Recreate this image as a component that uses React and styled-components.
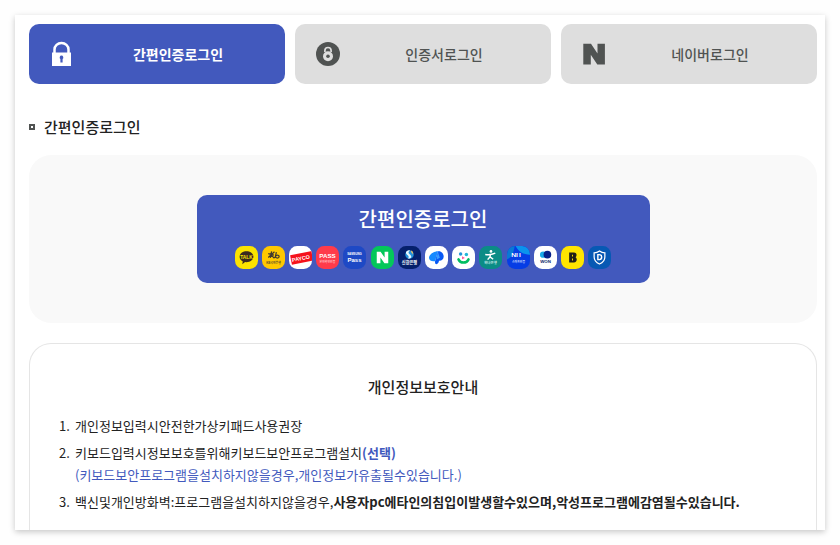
import React from "react";
import styled, { createGlobalStyle } from "styled-components";

const GlobalStyle = createGlobalStyle`
  *, *::before, *::after { box-sizing: border-box; }
  body { margin: 0; background: #fefefe; color: #222; font-family: "Noto Sans CJK KR", "Noto Sans", sans-serif; }
  button { font-family: inherit; border: 0; cursor: pointer; }
  h2, h3, ol { margin: 0; padding: 0; }
`;

const Page = styled.main`
  display: flex;
  min-height: 100vh;
  padding: 15px;
`;

const Card = styled.div`
  display: flex;
  flex: 1;
  flex-direction: column;
  min-width: 0;
  padding: 9px 8px 0 14px;
  background: #fff;
  box-shadow: 0 2px 6px rgba(0, 0, 0, 0.22);
`;

const Tabs = styled.nav`
  display: grid;
  grid-template-columns: repeat(3, 1fr);
  gap: 10px;
`;

const Tab = styled.button`
  display: flex;
  align-items: center;
  height: 60px;
  padding: 0 4px 0 20px;
  border-radius: 10px;
  background: ${(p) => (p.$active ? "#4259bd" : "#dedede")};
  color: ${(p) => (p.$active ? "#fff" : "#505352")};
  font-size: 14px;
  font-weight: ${(p) => (p.$active ? 700 : 500)};
  line-height: 22px;
`;

const TabIcon = styled.svg`
  flex: none;
  width: 26px;
  height: 26px;
`;

const TabLabel = styled.span`
  flex: 1;
  text-align: center;
`;

const SectionTitle = styled.h2`
  display: flex;
  align-items: center;
  gap: 9px;
  margin-top: 32px;
  font-size: 15px;
  font-weight: 500;
  line-height: 22px;

  &::before {
    content: "";
    width: 6px;
    height: 6px;
    border: 2px solid #505352;
  }
`;

const LoginPanel = styled.section`
  display: flex;
  justify-content: center;
  margin-top: 17px;
  padding: 40px 20px;
  border-radius: 22px;
  background: #f9f9f9;
`;

const LoginButton = styled.button`
  display: flex;
  flex-direction: column;
  gap: 13px;
  width: 100%;
  max-width: 453px;
  padding: 10px 38px 14px;
  border-radius: 10px;
  background: #4259bd;
  color: #fff;
  font-size: 20px;
  font-weight: 500;
  line-height: 28px;
  align-items: stretch;
`;

const Providers = styled.span`
  display: flex;
  justify-content: space-between;
`;

const ProviderIcon = styled.svg`
  width: 23px;
  height: 23px;
  font-family: "Liberation Sans", "Noto Sans CJK KR", sans-serif;
  font-weight: 700;
`;

const Notice = styled.section`
  flex: 1;
  margin-top: 20px;
  padding: 32px 29px 14px;
  border: 1px solid #e5e5e5;
  border-bottom: 0;
  border-radius: 22px 22px 0 0;
`;

const NoticeTitle = styled.h3`
  font-size: 15px;
  font-weight: 500;
  line-height: 22px;
  text-align: center;
`;

const NoticeList = styled.ol`
  display: grid;
  gap: 5px;
  margin-top: 17px;
  font-size: 13px;
  line-height: 22px;
  list-style: none;
  counter-reset: notice;
`;

const NoticeItem = styled.li`
  display: grid;
  grid-template-columns: 16px 1fr;
  counter-increment: notice;

  &::before {
    content: counter(notice) ".";
  }
`;

const Accent = styled.span`
  color: #4259bd;
`;

const AccentStrong = styled.strong`
  color: #4259bd;
`;

const LockIcon = () => (
  <TabIcon viewBox="0 0 26 26" aria-hidden="true">
    <path d="M5.500 13V8.500a7 6.500 0 0 1 14 0V13" fill="none" stroke="#fff" strokeWidth="2.500" />
    <path fill="#fff" d="M3 11.500h19V25H3z" />
    <path fill="#4259bd" d="M12.500 14.600a1.900 1.900 0 0 1 1.100 3.400v3.400h-2.200V18a1.900 1.900 0 0 1 1.100-3.400z" />
  </TabIcon>
);

const CertificateIcon = () => (
  <TabIcon viewBox="0 0 26 26" aria-hidden="true">
    <circle cx="13" cy="13" r="12" fill="#505352" />
    <path d="M9.900 11V9.600a3.100 3.100 0 0 1 6.200 0V11" fill="none" stroke="#dedede" strokeWidth="1.700" />
    <circle cx="13" cy="15.200" r="5" fill="#dedede" />
    <circle cx="13" cy="15.200" r="1.800" fill="#505352" />
  </TabIcon>
);

const NaverIcon = () => (
  <TabIcon viewBox="0 0 26 26" aria-hidden="true">
    <path fill="#505352" d="M2.300 2.800H10l6.500 9.700V2.800h7.400v20.700h-7.600l-6.500-9.700v9.700H2.300z" />
  </TabIcon>
);

const TABS = [
  { label: "간편인증로그인", Icon: LockIcon, active: true },
  { label: "인증서로그인", Icon: CertificateIcon },
  { label: "네이버로그인", Icon: NaverIcon },
];

const PROVIDERS = [
  {
    name: "카카오톡",
    color: "#fbe300",
    art: (
      <>
        <path fill="#3a2a20" d="M12 5.600c4 0 7.200 2.500 7.200 5.600s-3.200 5.700-7.200 5.700l-1.500-.1L7.600 19l.5-2.900c-2-1-3.300-2.800-3.300-4.900C4.800 8.100 8 5.600 12 5.600z" />
        <text x="12" y="13.100" fontSize="5" textAnchor="middle" fill="#fbe300">TALK</text>
      </>
    ),
  },
  {
    name: "KB국민은행",
    color: "#ffc800",
    art: (
      <>
        <g fill="none" stroke="#40382f" strokeWidth="1.300">
          <path d="M10 5.500 8.700 12.500M6.500 8l6 1.500M13 6l-6.500 6M9.500 9.500l3.500 3.300M15 6.500l-1.400 6" />
          <ellipse cx="16" cy="11" rx="1.900" ry="1.600" />
        </g>
        <text x="12" y="18.500" fontSize="3" textAnchor="middle" fill="#5c4d2c">KB국민은행</text>
      </>
    ),
  },
  {
    name: "페이코",
    color: "#fff",
    art: (
      <g transform="rotate(-11 13 13)">
        <path fill="#f5121c" d="M2 7.500h24v10H2z" />
        <text x="3" y="14.700" fontSize="5.600" fill="#fff">PAYCO</text>
      </g>
    ),
  },
  {
    name: "PASS",
    color: "#ff3b4a",
    art: (
      <g fill="#fff" textAnchor="middle">
        <text x="12" y="12.500" fontSize="6.500">PASS</text>
        <text x="12" y="18" fontSize="3" fill="#ffc0c4">본인확인인증</text>
      </g>
    ),
  },
  {
    name: "삼성패스",
    color: "#1e49c5",
    art: (
      <g fill="#fff" textAnchor="middle">
        <text x="12" y="9.800" fontSize="3">SAMSUNG</text>
        <text x="12" y="16.500" fontSize="6.300">Pass</text>
      </g>
    ),
  },
  { name: "네이버", color: "#04c75a", art: <path fill="#fff" d="M6 6h4l4.200 6V6H18v12h-4l-4.200-6v6H6z" /> },
  {
    name: "신한은행",
    color: "#05206c",
    art: (
      <>
        <circle cx="12" cy="9" r="4.400" fill="#2492dc" />
        <path fill="#e7f7ff" d="M11 4.500c-3 1-3.500 3-1.500 4.600 1.700 1.400 2.500 2.500.500 4 3.800.500 5.200-2 2.500-4.300-1.800-1.500-2.400-2.500.500-4.200z" />
        <path fill="#d6b968" d="M14 4.800c-1.500 1.700 1 2.200 1.300 4 1.200-1.200.300-3-1.300-4z" />
        <text x="12" y="19.300" fontSize="4.400" textAnchor="middle" fill="#fff">신한은행</text>
      </>
    ),
  },
  {
    name: "토스",
    color: "#fff",
    art: (
      <>
        <path fill="#168aff" d="M13.500 5.500C9 5.500 4.200 9 4.200 12.300c0 3 3.300 4.200 6.300 3.500z" />
        <path fill="#0759f5" d="M13.500 5.500c3.500-.8 6 2.500 6 5.500 0 2.800-2 4.600-5 4.400.1 1.700-1 2.900-2.700 3.600-1.200-.4-1.500-1.800-1.300-3.200z" />
        <path fill="#3b9eff" d="m13.500 5.500-1.500 8.500 3.500-1.800c-.9-2.200-1.600-4.200-2-6.700z" />
      </>
    ),
  },
  {
    name: "뱅크샐러드",
    color: "#fff",
    art: (
      <>
        <circle cx="9" cy="8.300" r="1.800" fill="#2196d9" />
        <circle cx="15" cy="8.800" r="1.800" fill="#23b7d8" />
        <path fill="#ff4f9b" d="m10.500 10.800 3 1.700-3 1.300z" />
        <path d="M6.800 14c2 4.400 8.400 4.400 10.400 0" fill="none" stroke="#00bd61" strokeWidth="2.700" strokeLinecap="round" />
      </>
    ),
  },
  {
    name: "하나은행",
    color: "#0b8c86",
    art: (
      <>
        <circle cx="12.500" cy="5.700" r="1.400" fill="#fff" />
        <path d="M6.500 8.800c3 .6 6.500.5 10.500-1.300M12 9l-.5 2.300-2.500 2.900m2.500-2.900 3.300 2.500" fill="none" stroke="#fff" strokeWidth="1.500" />
        <text x="12" y="19" fontSize="3.600" textAnchor="middle" fill="#d4eeee">하나은행</text>
      </>
    ),
  },
  {
    name: "NH농협",
    color: "#063de5",
    art: (
      <>
        <path fill="#0b93ed" d="M8 0h8c5 0 8 3 8 8v1C17 9 12 6 9 0z" />
        <path fill="#087ad4" d="M8 0c-5 0-8 3-8 8v6C5 12 7 7 8 0z" />
        <text x="9.500" y="12" fontSize="7" textAnchor="middle" fill="#fff">NH</text>
        <text x="12" y="17.500" fontSize="3" textAnchor="middle" fill="#cbdcff">스마트인증</text>
      </>
    ),
  },
  {
    name: "우리WON",
    color: "#fff",
    art: (
      <>
        <circle cx="9.500" cy="9" r="3.300" fill="#18a9e9" />
        <circle cx="14" cy="9" r="4" fill="#06218a" />
        <text x="12" y="18" fontSize="4.600" textAnchor="middle" fill="#09236a">WON</text>
      </>
    ),
  },
  {
    name: "국민인증서",
    color: "#ffe500",
    art: (
      <path fill="#211f18" fillRule="evenodd" d="M8.500 6.800h5c3 0 3.500 3.500 1.700 5 2.200 1.400 1.400 5.400-1.700 5.400h-5zm3 2.200v2h1V9zm0 4v2h1v-2z" />
    ),
  },
  {
    name: "드림인증",
    color: "#0759b4",
    art: (
      <>
        <path d="M12 5.200c2 1.600 3.600 2 5.600 2v4.300c0 3.500-2.200 5.900-5.600 7.300-3.400-1.400-5.600-3.800-5.600-7.300V7.200c2 0 3.600-.400 5.600-2z" fill="none" stroke="#fff" strokeWidth="1.300" />
        <path d="M10.300 9v5.200h1.500c3.300 0 3.300-5.200 0-5.200z" fill="none" stroke="#fff" strokeWidth="1.500" />
      </>
    ),
  },
];

export default function App() {
  return (
    <>
      <GlobalStyle />
      <Page>
        <Card>
          <Tabs>
            {TABS.map(({ label, Icon, active }) => (
              <Tab key={label} type="button" $active={active} aria-pressed={Boolean(active)}>
                <Icon />
                <TabLabel>{label}</TabLabel>
              </Tab>
            ))}
          </Tabs>

          <SectionTitle>간편인증로그인</SectionTitle>
          <LoginPanel>
            <LoginButton type="button">
              <span>간편인증로그인</span>
              <Providers>
                {PROVIDERS.map(({ name, color, art }, index) => (
                  <ProviderIcon key={name} viewBox="0 0 24 24" aria-hidden="true">
                    <clipPath id={`provider-${index}`}>
                      <rect width="24" height="24" rx="8.500" />
                    </clipPath>
                    <g clipPath={`url(#provider-${index})`}>
                      <path fill={color} d="M0 0h24v24H0z" />
                      {art}
                    </g>
                  </ProviderIcon>
                ))}
              </Providers>
            </LoginButton>
          </LoginPanel>

          <Notice>
            <NoticeTitle>개인정보보호안내</NoticeTitle>
            <NoticeList>
              <NoticeItem>
                <div>개인정보입력시안전한가상키패드사용권장</div>
              </NoticeItem>
              <NoticeItem>
                <div>
                  키보드입력시정보보호를위해키보드보안프로그램설치<AccentStrong>(선택)</AccentStrong>
                  <br />
                  <Accent>(키보드보안프로그램을설치하지않을경우,개인정보가유출될수있습니다.)</Accent>
                </div>
              </NoticeItem>
              <NoticeItem>
                <div>
                  백신및개인방화벽:프로그램을설치하지않을경우,
                  <strong>사용자pc에타인의침입이발생할수있으며,악성프로그램에감염될수있습니다.</strong>
                </div>
              </NoticeItem>
            </NoticeList>
          </Notice>
        </Card>
      </Page>
    </>
  );
}
